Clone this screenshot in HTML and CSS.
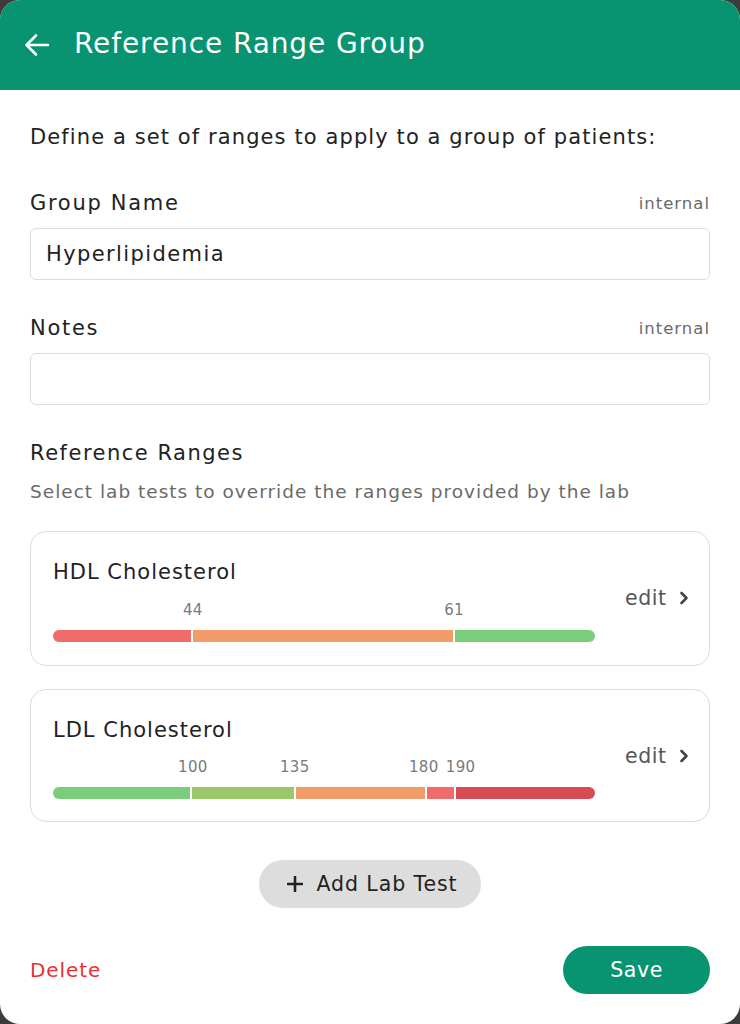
FILE: index.html
```html
<!DOCTYPE html>
<html lang="en">
<head>
<meta charset="utf-8">
<title>Reference Range Group</title>
<link rel="stylesheet" href="styles.css">
</head>
<body>
<div class="modal">
  <header class="topbar">
    <svg class="back" width="26" height="24" viewBox="0 0 26 24" aria-hidden="true">
      <path d="M24 12H3M12 2.5L2.5 12L12 21.5" fill="none" stroke="#fff" stroke-width="2.6" stroke-linecap="round" stroke-linejoin="round"/>
    </svg>
    <h1 class="title">Reference Range Group</h1>
  </header>
  <main class="content">
    <p class="intro">Define a set of ranges to apply to a group of patients:</p>

    <div class="field-head first">
      <span class="label">Group Name</span>
      <span class="hint">internal</span>
    </div>
    <div class="input">Hyperlipidemia</div>

    <div class="field-head">
      <span class="label">Notes</span>
      <span class="hint">internal</span>
    </div>
    <div class="input"></div>

    <h2 class="section">Reference Ranges</h2>
    <p class="sub">Select lab tests to override the ranges provided by the lab</p>

    <div class="card">
      <div class="card-main">
        <div class="card-title">HDL Cholesterol</div>
        <div class="scale">
          <span class="tick" style="left:25.8%">44</span>
          <span class="tick" style="left:74%">61</span>
        </div>
        <div class="bar">
          <span class="seg red" style="width:25.7%"></span>
          <span class="seg orange" style="width:48.2%"></span>
          <span class="seg green" style="width:26.1%"></span>
        </div>
      </div>
      <div class="edit">edit
        <svg width="10" height="14" viewBox="0 0 10 14" aria-hidden="true"><path d="M2.5 2L7.5 7L2.5 12" fill="none" stroke="#444" stroke-width="2.6" stroke-linecap="round" stroke-linejoin="round"/></svg>
      </div>
    </div>

    <div class="card second">
      <div class="card-main">
        <div class="card-title">LDL Cholesterol</div>
        <div class="scale">
          <span class="tick" style="left:25.8%">100</span>
          <span class="tick" style="left:44.6%">135</span>
          <span class="tick" style="left:68.4%">180</span>
          <span class="tick" style="left:75.2%">190</span>
        </div>
        <div class="bar">
          <span class="seg green" style="width:25.7%"></span>
          <span class="seg lime" style="width:19%"></span>
          <span class="seg orange" style="width:24.2%"></span>
          <span class="seg red" style="width:5%"></span>
          <span class="seg darkred" style="width:26.1%"></span>
        </div>
      </div>
      <div class="edit">edit
        <svg width="10" height="14" viewBox="0 0 10 14" aria-hidden="true"><path d="M2.5 2L7.5 7L2.5 12" fill="none" stroke="#444" stroke-width="2.6" stroke-linecap="round" stroke-linejoin="round"/></svg>
      </div>
    </div>

    <div class="add-row">
      <button class="add">
        <svg width="16" height="16" viewBox="0 0 16 16" aria-hidden="true"><path d="M8 1V15M1 8H15" stroke="#222" stroke-width="2.6" stroke-linecap="round"/></svg>
        <span>Add Lab Test</span>
      </button>
    </div>

    <div class="footer">
      <span class="delete">Delete</span>
      <button class="save">Save</button>
    </div>
  </main>
</div>
</body>
</html>
```

FILE: styles.css
```css
* { box-sizing: border-box; }
html, body { margin: 0; padding: 0; }
body {
  background: #3c3c3c;
  font-family: "DejaVu Sans", "Noto Sans", sans-serif;
  color: #222;
}
.modal {
  width: 740px;
  height: 1024px;
  background: #fff;
  border-radius: 20px;
  overflow: hidden;
  display: flex;
  flex-direction: column;
}
.topbar {
  height: 90px;
  background: #089470;
  display: flex;
  align-items: center;
  padding-left: 24px;
  gap: 24px;
  flex-shrink: 0;
}
.back { display: block; }
.title {
  margin: 0;
  color: #fff;
  font-size: 28px;
  font-weight: 400;
  line-height: 32px;
  letter-spacing: 0.9px;
  margin-top: -2px;
}
.content {
  padding: 33px 30px 30px;
  display: flex;
  flex-direction: column;
}
.intro {
  margin: 0;
  font-size: 21px;
  line-height: 28px;
  letter-spacing: 1.1px;
}
.field-head {
  display: flex;
  justify-content: space-between;
  align-items: center;
  margin-top: 34px;
  height: 28px;
}
.field-head.first { margin-top: 38px; }
.label { font-size: 21px; letter-spacing: 1.7px; }
.hint { font-size: 16.5px; color: #6a6a6a; letter-spacing: 1px; }
.input {
  margin-top: 11px;
  height: 52px;
  border: 1px solid #dcdcdc;
  border-radius: 6px;
  padding: 0 15px;
  display: flex;
  align-items: center;
  font-size: 21px;
  letter-spacing: 1.4px;
  color: #1e1e1e;
}
.section {
  margin: 34px 0 0;
  font-size: 21px;
  font-weight: 400;
  line-height: 28px;
  letter-spacing: 1.5px;
}
.sub {
  margin: 12px 0 0;
  font-size: 18.5px;
  line-height: 26px;
  color: #6a6a6a;
  letter-spacing: 1px;
}
.card {
  margin-top: 26px;
  border: 1px solid #dcdcdc;
  border-radius: 16px;
  padding: 26px 20px 23px 22px;
  display: flex;
  align-items: center;
  gap: 30px;
}
.card.second { margin-top: 23px; padding-bottom: 22px; }
.card-main { width: 542px; flex-shrink: 0; }
.card-title {
  font-size: 21px;
  line-height: 28px;
  color: #222;
  letter-spacing: 1px;
}
.scale {
  position: relative;
  height: 20px;
  margin-top: 14px;
}
.second .scale { margin-top: 13px; }
.tick {
  position: absolute;
  top: 0;
  transform: translateX(-50%);
  font-size: 15px;
  line-height: 20px;
  color: #7a7a7a;
  letter-spacing: 0.3px;
}
.bar {
  margin-top: 10px;
  height: 12px;
  border-radius: 6px;
  overflow: hidden;
  display: flex;
  gap: 2px;
  background: #fff;
}
.seg { display: block; height: 100%; }
.red { background: #f16b6b; }
.orange { background: #f19c69; }
.green { background: #7acd7b; }
.lime { background: #98c869; }
.darkred { background: #d94a55; }
.edit {
  display: flex;
  align-items: center;
  gap: 12px;
  font-size: 20.5px;
  color: #555;
  letter-spacing: 0.6px;
  margin-top: -4px;
}
.edit svg { display: block; }
.add-row {
  display: flex;
  justify-content: center;
  margin-top: 38px;
}
.add {
  height: 48px;
  width: 222px;
  border: none;
  border-radius: 24px;
  background: #dddddd;
  display: flex;
  align-items: center;
  justify-content: center;
  gap: 14px;
  font-family: inherit;
  font-size: 20.5px;
  color: #222;
  letter-spacing: 0.9px;
  padding: 0 0 0 4px;
}
.add svg { display: block; }
.footer {
  margin-top: 38px;
  display: flex;
  justify-content: space-between;
  align-items: center;
}
.delete {
  color: #e8312c;
  font-size: 20px;
  letter-spacing: 0.9px;
}
.save {
  width: 147px;
  height: 48px;
  border: none;
  border-radius: 24px;
  background: #089470;
  color: #fff;
  font-family: inherit;
  font-size: 20.5px;
  letter-spacing: 0.6px;
}
```
